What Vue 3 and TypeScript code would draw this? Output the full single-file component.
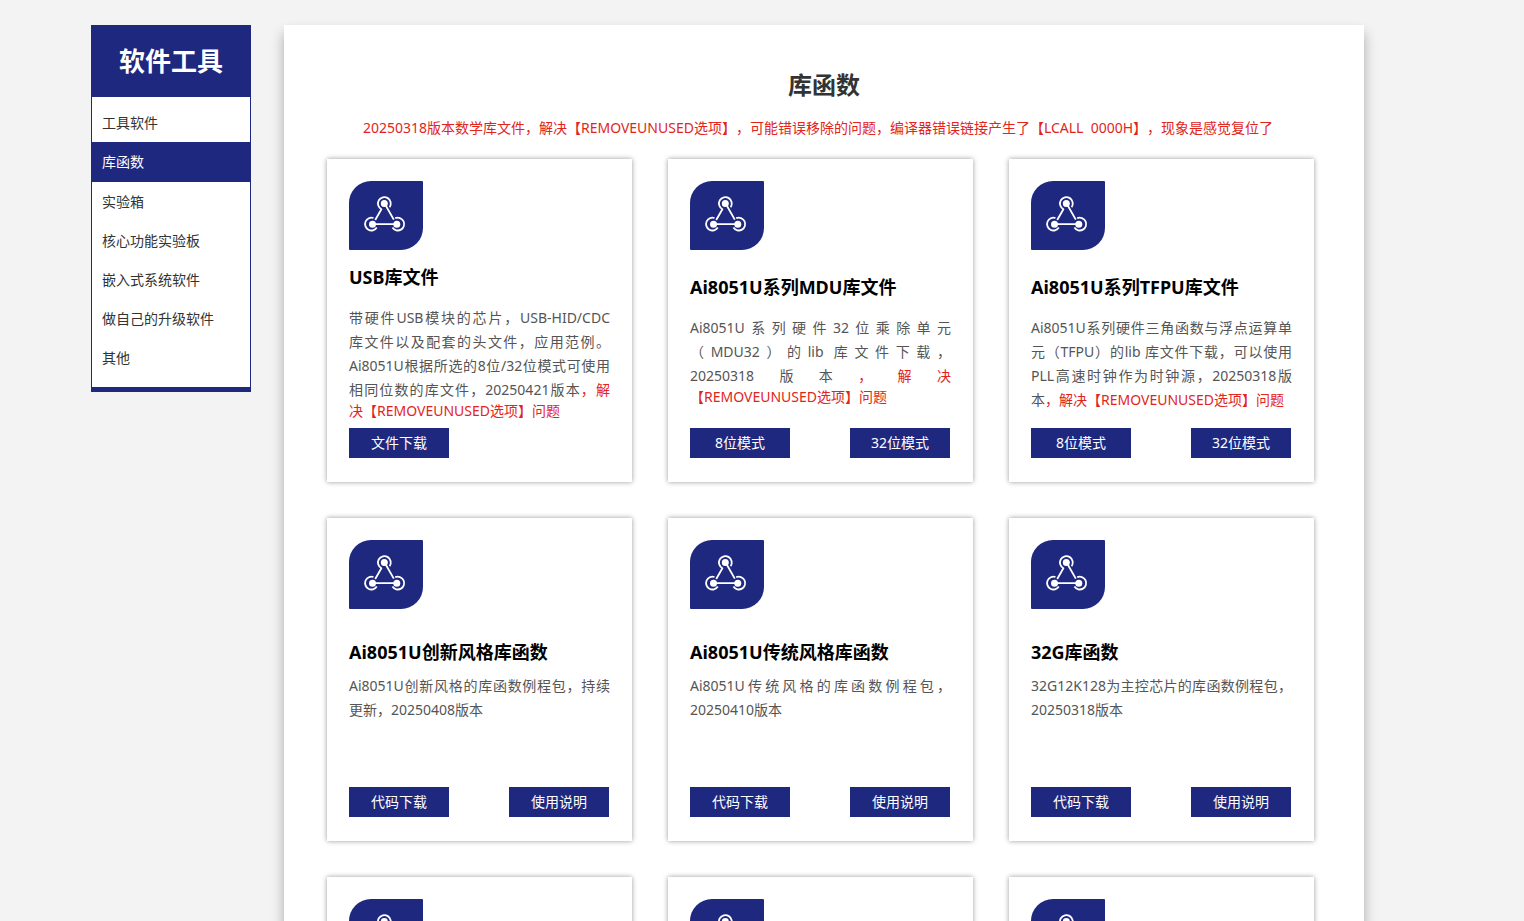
<script setup lang="ts">
interface Line {
  text: string
  red?: string
  fit?: boolean
  tight?: boolean
}
interface Card {
  layout: string
  title?: string
  lines: Line[]
  actions: string[]
}

const menu: string[] = ['工具软件', '库函数', '实验箱', '核心功能实验板', '嵌入式系统软件', '做自己的升级软件', '其他']
const active = '库函数'

const cards: Card[] = [
  {
    layout: 'near',
    title: 'USB库文件',
    lines: [
      { text: '带硬件USB模块的芯片，USB-HID/CDC', fit: true },
      { text: '库文件以及配套的头文件，应用范例。', fit: true },
      { text: 'Ai8051U根据所选的8位/32位模式可使用', fit: true },
      { text: '相同位数的库文件，20250421版本', red: '，解', fit: true },
      { text: '', red: '决【REMOVEUNUSED选项】问题', tight: true },
    ],
    actions: ['文件下载'],
  },
  {
    layout: 'middle',
    title: 'Ai8051U系列MDU库文件',
    lines: [
      { text: 'Ai8051U系列硬件32位乘除单元', fit: true },
      { text: '（MDU32）的lib 库文件下载，', fit: true },
      { text: '20250318版本', red: '，解决', fit: true },
      { text: '', red: '【REMOVEUNUSED选项】问题', tight: true },
    ],
    actions: ['8位模式', '32位模式'],
  },
  {
    layout: 'middle',
    title: 'Ai8051U系列TFPU库文件',
    lines: [
      { text: 'Ai8051U系列硬件三角函数与浮点运算单', fit: true },
      { text: '元（TFPU）的lib 库文件下载，可以使用', fit: true },
      { text: 'PLL高速时钟作为时钟源，20250318版', fit: true },
      { text: '本', red: '，解决【REMOVEUNUSED选项】问题' },
    ],
    actions: ['8位模式', '32位模式'],
  },
  {
    layout: 'far',
    title: 'Ai8051U创新风格库函数',
    lines: [{ text: 'Ai8051U创新风格的库函数例程包，持续', fit: true }, { text: '更新，20250408版本' }],
    actions: ['代码下载', '使用说明'],
  },
  {
    layout: 'far',
    title: 'Ai8051U传统风格库函数',
    lines: [{ text: 'Ai8051U传统风格的库函数例程包，', fit: true }, { text: '20250410版本' }],
    actions: ['代码下载', '使用说明'],
  },
  {
    layout: 'far',
    title: '32G库函数',
    lines: [{ text: '32G12K128为主控芯片的库函数例程包，', fit: true }, { text: '20250318版本' }],
    actions: ['代码下载', '使用说明'],
  },
  { layout: 'far', lines: [], actions: [] },
  { layout: 'far', lines: [], actions: [] },
  { layout: 'far', lines: [], actions: [] },
]
</script>

<template>
  <div class="page">
    <nav class="sidebar">
      <h2 class="sidebar-title">软件工具</h2>
      <ul class="menu">
        <li v-for="item in menu" :key="item">
          <a href="#" :class="['menu-link', { active: item === active }]">{{ item }}</a>
        </li>
      </ul>
    </nav>
    <main class="content">
      <h1 class="heading">库函数</h1>
      <p class="notice">20250318版本数学库文件，解决【REMOVEUNUSED选项】，可能错误移除的问题，编译器错误链接产生了【LCALL&nbsp; 0000H】，现象是感觉复位了</p>
      <div class="grid">
        <article v-for="(card, i) in cards" :key="i" :class="['card', card.layout]">
          <svg class="icon" viewBox="0 0 74 69" aria-hidden="true">
            <path d="M22 0H73Q74 0 74 1V47A22 22 0 0 1 52 69H1Q0 69 0 68V22A22 22 0 0 1 22 0Z" fill="#1f287f" />
            <g fill="none" stroke="#fff" stroke-width="1.8" stroke-linejoin="round">
              <path d="M24.5 37A6.4 6.4 0 1 0 27.8 46.6" />
              <path d="M43.4 46.6A6.4 6.4 0 1 0 46.2 37.2" />
              <path d="M26.2 39L32.4 28.2A6.4 6.4 0 1 1 40.6 26.2" />
              <path d="M37 25L44.8 38.6M26 43.2H46" />
            </g>
            <g fill="#fff">
              <circle cx="35.3" cy="22.4" r="3.5" />
              <circle cx="23.5" cy="43.2" r="3.5" />
              <circle cx="47.8" cy="43.2" r="3.5" />
            </g>
          </svg>
          <h3 v-if="card.title" class="card-title">{{ card.title }}</h3>
          <p class="desc">
            <span v-for="(line, n) in card.lines" :key="n" :class="['line', { fit: line.fit, tight: line.tight }]">{{ line.text }}<span v-if="line.red" class="red">{{ line.red }}</span></span>
          </p>
          <div class="actions">
            <a v-for="label in card.actions" :key="label" href="#" class="action">{{ label }}</a>
          </div>
        </article>
      </div>
    </main>
  </div>
</template>

<style>
body {
  background: #f3f3f3;
}
</style>

<style scoped>
.page {
  box-sizing: border-box;
  height: 100vh;
  overflow: hidden;
  display: grid;
  grid-template-columns: 160px minmax(0, 1fr);
  align-items: start;
  gap: 33px;
  padding: 25px 160px 0 91px;
  font-family: "Noto Sans", "Noto Sans CJK SC", sans-serif;
  font-size: 14px;
  color: #333;
  text-spacing-trim: space-all;
}
h1, h2, h3, p, ul {
  margin: 0;
  padding: 0;
}
a {
  text-decoration: none;
}
.sidebar {
  box-sizing: border-box;
  background: #fff;
  border: 1px solid #1f287f;
  border-width: 0 1px 5px;
}
.sidebar-title {
  background: #1f287f;
  color: #fff;
  font-size: 26px;
  line-height: 72px;
  text-align: center;
}
.menu {
  list-style: none;
  padding: 6px 0 10px;
}
.menu-link {
  display: block;
  padding: 0 10px;
  line-height: 39px;
  color: #333;
}
.menu-link.active {
  background: #1f287f;
  color: #fff;
  line-height: 40px;
}
.content {
  background: #fff;
  box-shadow: 0 8px 12px rgba(0, 0, 0, 0.3);
  padding: 43px 50px 36px 43px;
}
.heading {
  font-size: 24px;
  line-height: 34px;
  text-align: center;
  padding-left: 7px;
}
.notice {
  color: #e1251b;
  line-height: 20px;
  margin: 16px 0 21px;
  padding-right: 5px;
  text-align: center;
}
.grid {
  display: grid;
  grid-template-columns: repeat(3, minmax(0, 1fr));
  gap: 36px;
}
.card {
  box-sizing: border-box;
  min-height: 323px;
  display: flex;
  flex-direction: column;
  padding: 22px 22px 24px;
  background: #fff;
  box-shadow: 0 0 5px rgba(0, 0, 0, 0.4);
}
.icon {
  width: 74px;
  height: 69px;
}
.card-title {
  font-size: 18px;
  line-height: 24px;
  color: #000;
  white-space: nowrap;
}
.near .card-title {
  margin: 15px 0 17px;
}
.middle .card-title {
  margin: 25px 0 17px;
}
.far .card-title {
  margin: 31px 0 10px;
}
.desc {
  color: #555;
}
.line {
  display: block;
  line-height: 24px;
  white-space: nowrap;
}
.line.fit {
  white-space: normal;
  text-align: justify;
  text-align-last: justify;
}
.line.tight {
  line-height: 18px;
}
.red {
  color: #e1251b;
}
.actions {
  display: flex;
  gap: 60px;
  margin-top: auto;
}
.action {
  width: 100px;
  background: #1f287f;
  color: #fff;
  line-height: 30px;
  text-align: center;
}
</style>
